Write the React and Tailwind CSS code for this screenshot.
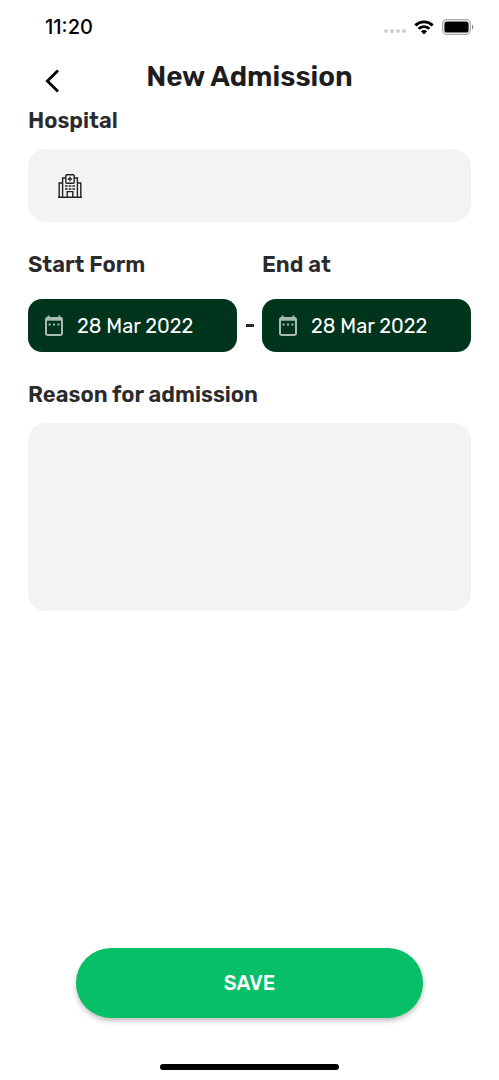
import { useState } from "react"

function StatusBar() {
  return (
    <div className="flex h-[54px] items-center justify-between pl-[45px] pr-[25px] text-black">
      <span className="font-['Inter'] text-xl font-medium leading-6">11:20</span>

      <div className="flex items-center gap-2">
        <div className="flex gap-[2px] pt-2">
          <span className="size-1 rounded-full bg-[#cfcfcf]" />
          <span className="size-1 rounded-full bg-[#cfcfcf]" />
          <span className="size-1 rounded-full bg-[#cfcfcf]" />
          <span className="size-1 rounded-full bg-[#cfcfcf]" />
        </div>

        <svg width="20" height="15" viewBox="0 0 20 15" fill="none" stroke="currentColor" strokeWidth="2.9">
          <path d="M1.3 5.4C6.2.7 13.8.7 18.7 5.4" />
          <path d="M4.6 8.8c3.1-2.9 7.7-2.9 10.8 0" />
          <path d="M10 14.4 6.9 11.3c1.8-1.6 4.4-1.6 6.2 0Z" fill="currentColor" stroke="none" />
        </svg>

        <svg width="32" height="16" viewBox="0 0 32 16">
          <rect x=".7" y=".7" width="27.6" height="14.6" rx="4.2" fill="none" stroke="#a3a3a3" strokeWidth="1.2" />
          <rect x="2.4" y="2.4" width="24.2" height="11.2" rx="2.6" fill="#000" />
          <path d="M30 5.4c1.7.9 1.7 4.3 0 5.2Z" fill="#8a8a8a" />
        </svg>
      </div>
    </div>
  )
}

function HospitalIcon() {
  return (
    <svg width="24" height="24" viewBox="0 0 24 24" fill="none" stroke="#222" strokeWidth="1.4" className="shrink-0">
      <path d="M0 23.2h24M4.6 23V4h3.2M16.2 4h3.2v19M4.6 9H1.2v14M19.4 9h3.4v14" />
      <rect x="7.8" y=".8" width="8.4" height="8.4" rx="1" />
      <path d="M12 2.8v4.4M9.8 5h4.4" />
      <path d="M9.2 23v-5.4h5.6V23" />
      <path d="M7 12h2.6M10.7 12h2.6M14.4 12H17M7 15h2.6M10.7 15h2.6M14.4 15H17" />
    </svg>
  )
}

function CalendarIcon() {
  return (
    <svg width="20" height="22" viewBox="0 0 20 22" fill="none" stroke="#a9bcaf" strokeWidth="2" className="shrink-0">
      <rect x="2" y="3" width="16" height="17" rx="1.4" />
      <path d="M2 4.2h16" strokeWidth="3" />
      <path d="M4.6.6V4M15.4.6V4" />
      <path d="M4.6 9.6h2M9 9.6h2M13.4 9.6h2" />
    </svg>
  )
}

function DateField({ id, value, onChange }) {
  return (
    <div className="flex h-[53px] min-w-0 items-center gap-[13px] rounded-[14px] bg-[#00341d] pl-4 pr-2">
      <CalendarIcon />
      <input
        id={id}
        type="text"
        value={value}
        onChange={(e) => onChange(e.target.value)}
        className="w-full min-w-0 bg-transparent text-xl text-white outline-none"
      />
    </div>
  )
}

export default function App() {
  const [hospital, setHospital] = useState("")
  const [start, setStart] = useState("28 Mar 2022")
  const [end, setEnd] = useState("28 Mar 2022")
  const [reason, setReason] = useState("")

  return (
    <div className="flex min-h-screen flex-col bg-white font-['Rubik','Roboto',sans-serif] text-[#2b2b2d]">

      <StatusBar />

      {/* Header */}
      <header className="grid h-[46px] grid-cols-[1fr_auto_1fr] items-center px-10">
        <button type="button" aria-label="Back" className="mt-2 flex size-6 items-center justify-center text-black">
          <svg width="14" height="24" viewBox="0 0 14 24" fill="none" stroke="currentColor" strokeWidth="2.8">
            <path d="M13 1.5 2.4 12 13 22.5" />
          </svg>
        </button>
        <h1 className="text-[28px] font-semibold leading-9 text-[#1d1d1f]">New Admission</h1>
      </header>

      <form className="flex flex-1 flex-col" onSubmit={(e) => e.preventDefault()}>
        <div className="flex flex-col px-7 pt-[5px]">

          {/* Hospital */}
          <label htmlFor="hospital" className="text-[22px] font-semibold leading-8">Hospital</label>
          <div className="mt-3 flex h-[73px] items-center gap-4 rounded-[18px] bg-[#f3f3f3] px-[30px]">
            <HospitalIcon />
            <input
              id="hospital"
              type="text"
              value={hospital}
              onChange={(e) => setHospital(e.target.value)}
              className="w-full min-w-0 bg-transparent text-xl outline-none"
            />
          </div>

          {/* Dates */}
          <div className="mt-[27px] grid grid-cols-[1fr_25px_1fr] gap-y-[18px]">
            <label htmlFor="start" className="text-[22px] font-semibold leading-8">Start Form</label>
            <span />
            <label htmlFor="end" className="text-[22px] font-semibold leading-8">End at</label>
            <DateField id="start" value={start} onChange={setStart} />
            <span className="flex items-center justify-center">
              <span className="h-[3px] w-2 bg-[#2b2b2d]" />
            </span>
            <DateField id="end" value={end} onChange={setEnd} />
          </div>

          {/* Reason */}
          <label htmlFor="reason" className="mt-[27px] text-[22px] font-semibold leading-8">Reason for admission</label>
          <textarea
            id="reason"
            value={reason}
            onChange={(e) => setReason(e.target.value)}
            className="mt-3 h-[188px] resize-none rounded-[18px] bg-[#f3f3f3] p-5 text-xl outline-none"
          />
        </div>

        {/* Save */}
        <div className="mt-auto px-[76px] pb-[46px] pt-8">
          <button
            type="submit"
            className="h-[70px] w-full rounded-full bg-[#07bf67] text-xl font-medium text-white shadow-[0_3px_5px_rgba(0,0,0,0.25)]"
          >
            SAVE
          </button>
        </div>
      </form>

      <div className="mb-[10px] h-[6px] w-[179px] self-center rounded-full bg-black" />

    </div>
  )
}
